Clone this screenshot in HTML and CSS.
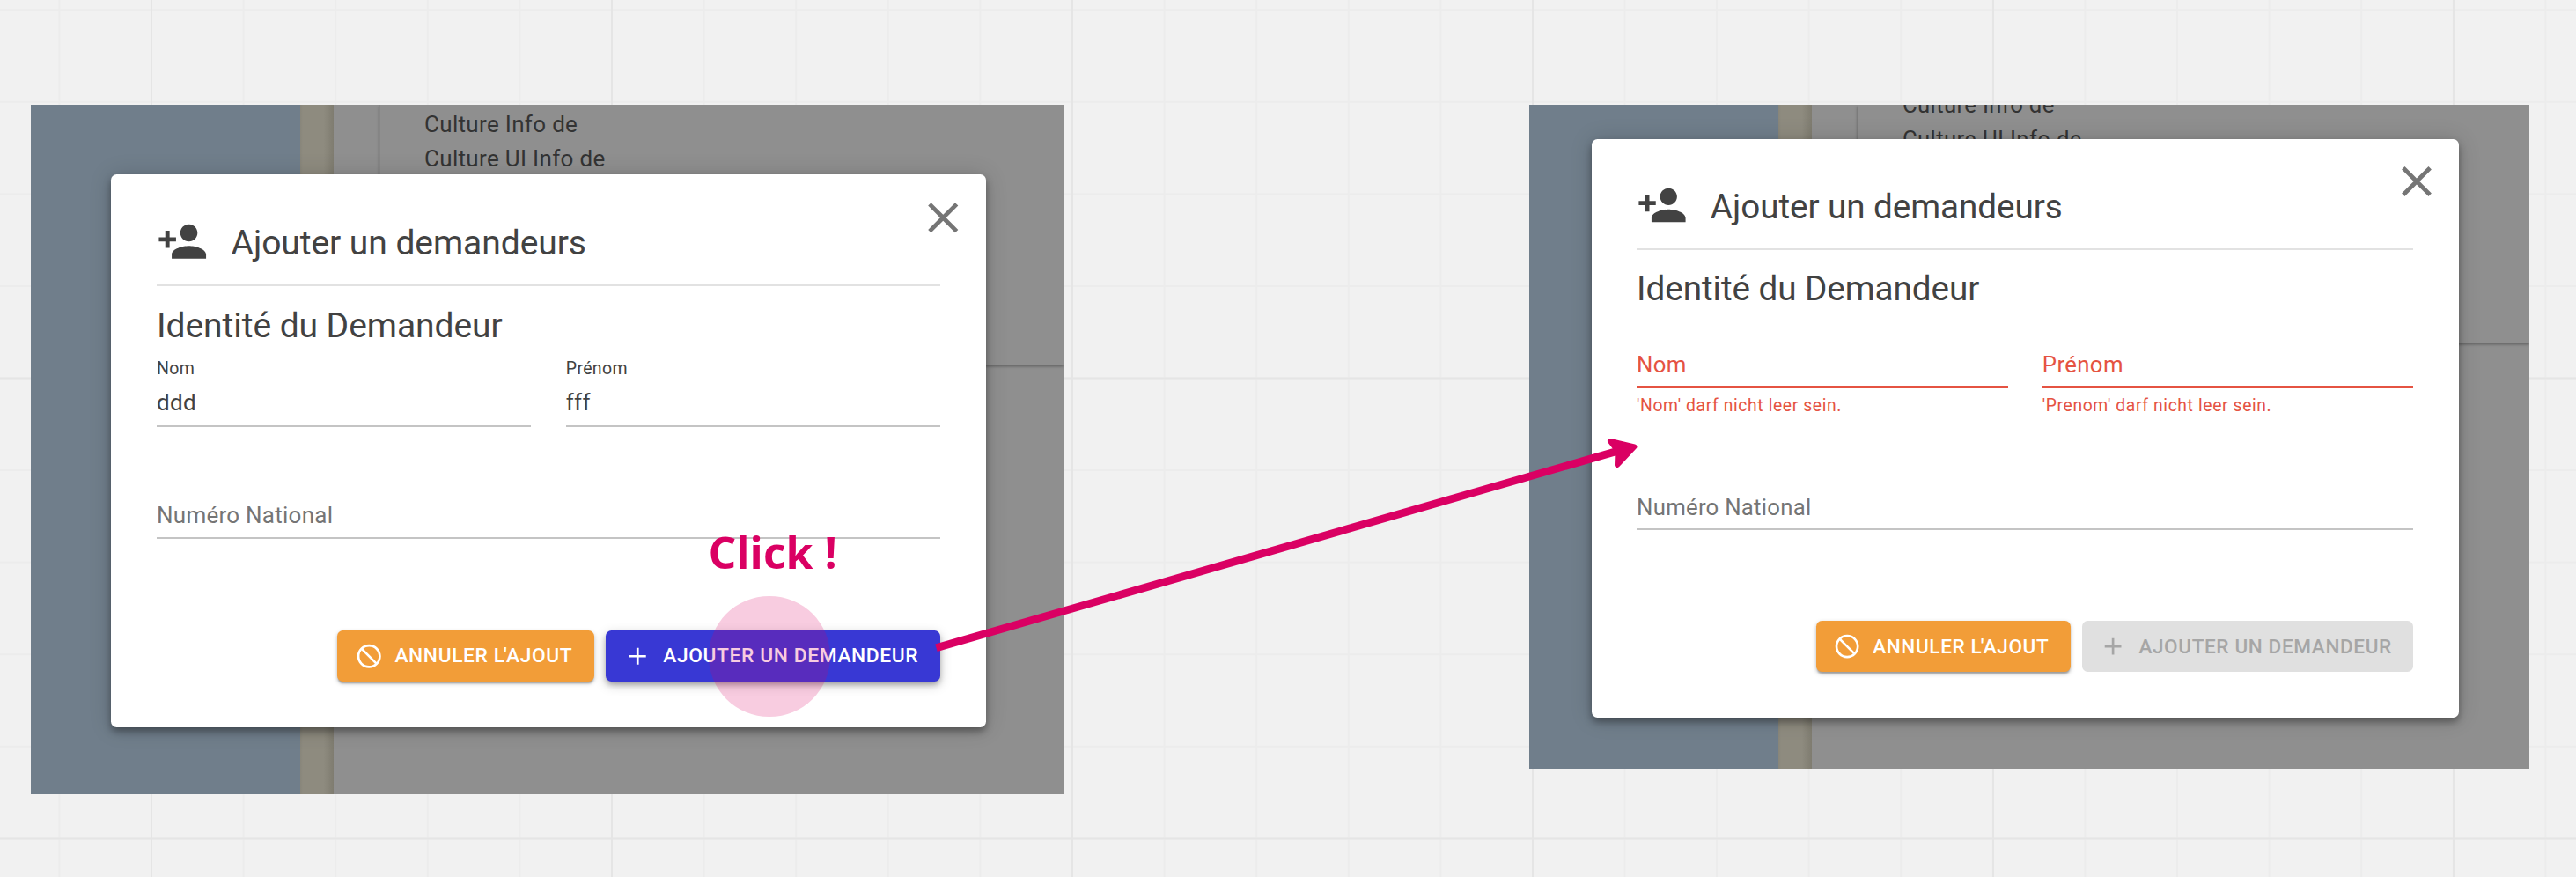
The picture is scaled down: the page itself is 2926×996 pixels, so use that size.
FILE: index.html
```html
<!DOCTYPE html>
<html lang="fr">
<head>
<meta charset="utf-8">
<title>Ajouter un demandeur</title>
<link rel="stylesheet" href="styles.css">
</head>
<body>
<main class="board">
  <section class="frame frame-filled">
    <div class="page">
      <div class="page-nav"></div>
      <div class="page-rail"></div>
      <div class="page-body">
        <div class="page-card">
          <p>Culture Info de</p>
          <p>Culture UI Info de</p>
        </div>
      </div>
    </div>
    <div class="dialog">
      <svg class="close" viewBox="0 0 24 24"><path d="M19 6.41 17.59 5 12 10.59 6.41 5 5 6.41 10.59 12 5 17.59 6.41 19 12 13.41 17.59 19 19 17.59 13.41 12z"/></svg>
      <header class="dialog-head">
        <svg class="head-icon" viewBox="0 0 24 24"><path d="M15 12c2.21 0 4-1.79 4-4s-1.79-4-4-4-4 1.790-4 4 1.790 4 4 4zm-9-2V7H4v3H1v2h3v3h2v-3h3v-2H6zm9 4c-2.670 0-8 1.340-8 4v2h16v-2c0-2.660-5.330-4-8-4z"/></svg>
        <h1>Ajouter un demandeurs</h1>
      </header>
      <h2>Identité du Demandeur</h2>
      <div class="row">
        <div class="field"><div class="control"><label>Nom</label><div class="value">ddd</div></div></div>
        <div class="field"><div class="control"><label>Prénom</label><div class="value">fff</div></div></div>
      </div>
      <div class="single">Numéro National</div>
      <footer class="actions">
        <button class="btn cancel"><svg viewBox="0 0 24 24"><path d="M12 2C6.480 2 2 6.480 2 12s4.480 10 10 10 10-4.480 10-10S17.520 2 12 2zM4 12c0-4.420 3.580-8 8-8 1.850 0 3.550.63 4.900 1.690L5.690 16.900C4.630 15.550 4 13.850 4 12zm8 8c-1.850 0-3.550-.63-4.900-1.690L18.310 7.100C19.370 8.450 20 10.150 20 12c0 4.420-3.580 8-8 8z"/></svg><span>ANNULER <span class="kern">L'</span>AJOUT</span></button>
        <button class="btn submit"><svg viewBox="0 0 24 24"><path d="M19 13h-6v6h-2v-6H5v-2h6V5h2v6h6z"/></svg><span>AJOUTER UN DEMANDEUR</span></button>
      </footer>
    </div>
  </section>

  <section class="frame frame-errors">
    <div class="page">
      <div class="page-nav"></div>
      <div class="page-rail"></div>
      <div class="page-body">
        <div class="page-card">
          <p>Culture Info de</p>
          <p>Culture UI Info de</p>
        </div>
      </div>
    </div>
    <div class="dialog">
      <svg class="close" viewBox="0 0 24 24"><path d="M19 6.41 17.59 5 12 10.59 6.41 5 5 6.41 10.59 12 5 17.59 6.41 19 12 13.41 17.59 19 19 17.59 13.41 12z"/></svg>
      <header class="dialog-head">
        <svg class="head-icon" viewBox="0 0 24 24"><path d="M15 12c2.21 0 4-1.79 4-4s-1.79-4-4-4-4 1.790-4 4 1.790 4 4 4zm-9-2V7H4v3H1v2h3v3h2v-3h3v-2H6zm9 4c-2.670 0-8 1.340-8 4v2h16v-2c0-2.660-5.330-4-8-4z"/></svg>
        <h1>Ajouter un demandeurs</h1>
      </header>
      <h2>Identité du Demandeur</h2>
      <div class="row">
        <div class="field invalid"><div class="control">Nom</div><p class="help">'Nom' darf nicht leer sein.</p></div>
        <div class="field invalid"><div class="control">Prénom</div><p class="help">'Prenom' darf nicht leer sein.</p></div>
      </div>
      <div class="single">Numéro National</div>
      <footer class="actions">
        <button class="btn cancel"><svg viewBox="0 0 24 24"><path d="M12 2C6.480 2 2 6.480 2 12s4.480 10 10 10 10-4.480 10-10S17.520 2 12 2zM4 12c0-4.420 3.580-8 8-8 1.850 0 3.550.63 4.900 1.690L5.690 16.900C4.630 15.550 4 13.850 4 12zm8 8c-1.850 0-3.550-.63-4.900-1.690L18.310 7.100C19.370 8.450 20 10.150 20 12c0 4.420-3.580 8-8 8z"/></svg><span>ANNULER <span class="kern">L'</span>AJOUT</span></button>
        <button class="btn submit" disabled><svg viewBox="0 0 24 24"><path d="M19 13h-6v6h-2v-6H5v-2h6V5h2v6h6z"/></svg><span>AJOUTER UN DEMANDEUR</span></button>
      </footer>
    </div>
  </section>

  <div class="tap"></div>
  <div class="note">Click !</div>
  <svg class="arrow" viewBox="0 0 2926 996"><path class="shaft" d="M1063.500 735.700 1838 512"/><path class="tip" d="M1829 501 1856.500 507.300 1837 528 1837.500 512z"/></svg>
</main>
</body>
</html>
```
FILE: styles.css
```css
* { box-sizing: border-box; margin: 0; padding: 0; }

body { font-family: Roboto, "Noto Sans", sans-serif; }

.board {
  position: relative;
  width: 2926px;
  height: 996px;
  overflow: hidden;
  background-color: #f1f1f1;
  background-image:
    linear-gradient(90deg, #e5e5e5 2px, transparent 2px),
    linear-gradient(#e5e5e5 2px, transparent 2px),
    linear-gradient(90deg, #ececec 2px, transparent 2px),
    linear-gradient(#ececec 2px, transparent 2px);
  background-size: 523px 100%, 100% 523px, 104.6px 100%, 100% 104.6px;
  background-position: 171px 0, 0 428.500px, 171px 0, 0 428.500px;
}

/* One design pixel is --u device pixels. */
.frame { position: absolute; top: 119px; overflow: hidden; }
.frame-filled { --u: 1.625px; left: 35px; width: 1173px; height: 783px; }
.frame-errors { --u: 1.611px; left: 1737px; width: 1136px; height: 754px; }

.page { display: flex; height: 100%; background: #8f8f8f; }
.page-nav { width: 306px; background: #707e8b; }
.page-rail { width: 38px; background: linear-gradient(90deg, #87857a, #8e8b7f 3px, #8e8b7f 70%, #7f7c70); }
.page-body { flex: 1; padding-left: 52px; }
.page-card {
  height: 295px;
  padding: 3px 0 0 50px;
  border-left: 1px solid #868686;
  background: #8f8f8f;
  box-shadow: 0 2px 3px #5c5c5c;
  color: #333;
  font-size: calc(16 * var(--u));
  line-height: calc(24 * var(--u));
  letter-spacing: .32px;
}
.frame-errors .page-nav { width: 283px; }
.frame-errors .page-card { display: flow-root; height: 270px; padding-top: 0; }
.frame-errors .page-card p:first-child { margin-top: -19px; }

.dialog {
  position: absolute;
  top: 79px;
  left: 91px;
  width: 994px;
  height: 628px;
  padding: 0 calc(32 * var(--u));
  border-radius: calc(4 * var(--u));
  background: #fff;
  color: #424242;
  box-shadow: 0 5px 8px rgba(0, 0, 0, .35), 0 1px 26px rgba(0, 0, 0, .16);
}
.frame-errors .dialog { top: 38.500px; left: 70.500px; width: 985.500px; height: 657.300px; }

.close {
  position: absolute;
  top: calc(12.300 * var(--u));
  right: calc(11.900 * var(--u));
  width: calc(36 * var(--u));
  height: calc(36 * var(--u));
  fill: #757575;
}

.dialog-head {
  display: flex;
  height: calc(78.300 * var(--u));
  padding-top: calc(29 * var(--u));
  border-bottom: 2px solid #e2e2e2;
}
.head-icon { width: calc(36 * var(--u)); height: calc(36 * var(--u)); fill: #424242; }
h1, h2 { font-weight: 400; font-size: calc(24 * var(--u)); letter-spacing: -.06px; }
h1 { margin: calc(1.100 * var(--u)) 0 0 calc(16 * var(--u)); line-height: calc(36 * var(--u)); }
h2 { margin-top: calc(11.500 * var(--u)); line-height: calc(32 * var(--u)); }

.row { display: grid; grid-template-columns: 1fr 1fr; gap: calc(24.300 * var(--u)); height: calc(104.400 * var(--u)); }
.control { height: calc(54.700 * var(--u)); padding-top: calc(6.200 * var(--u)); border-bottom: 2px solid #c4c4c4; letter-spacing: .35px; }
label { display: block; font-size: calc(12 * var(--u)); line-height: calc(16 * var(--u)); }
.value { margin-top: calc(3.900 * var(--u)); font-size: calc(16 * var(--u)); line-height: calc(24 * var(--u)); }

.frame-errors .row { height: calc(126 * var(--u)); }
.invalid { color: #e55342; }
.invalid .control {
  height: calc(54.200 * var(--u));
  padding-top: calc(25.800 * var(--u));
  border-bottom: 3px solid #e55342;
  font-size: calc(16 * var(--u));
  line-height: calc(24 * var(--u));
}
.help { margin-top: calc(4.200 * var(--u)); font-size: calc(12 * var(--u)); line-height: calc(16 * var(--u)); letter-spacing: calc(.38 * var(--u)); }

.single {
  height: calc(28.300 * var(--u));
  border-bottom: 2px solid #c4c4c4;
  color: #757575;
  font-size: calc(16 * var(--u));
  line-height: calc(24 * var(--u));
  letter-spacing: .25px;
}

.actions { display: flex; justify-content: flex-end; gap: calc(8 * var(--u)); margin-top: calc(64 * var(--u)); }
.btn {
  display: flex;
  align-items: center;
  gap: calc(8 * var(--u));
  width: calc(179.600 * var(--u));
  height: calc(36 * var(--u));
  padding-left: calc(12 * var(--u));
  border: 0;
  border-radius: calc(4 * var(--u));
  color: #fff;
  font: 500 calc(14 * var(--u)) Roboto, sans-serif;
  letter-spacing: .62px;
  white-space: nowrap;
}
.btn svg { width: calc(20 * var(--u)); height: calc(20 * var(--u)); fill: currentColor; }
.cancel svg { transform: scaleX(-1); }
.kern { letter-spacing: -.9px; }
.cancel { background: #f29d38; box-shadow: 0 3px 2px -1px rgba(0, 0, 0, .25), 0 2px 5px rgba(0, 0, 0, .25); }
.submit { width: calc(233.700 * var(--u)); background: #3838d4; box-shadow: 0 4px 6px -1px rgba(0, 0, 0, .3), 0 4px 14px rgba(0, 0, 0, .2); }
.submit:disabled { background: #e0e0e0; color: #a6a6a6; box-shadow: none; }

.tap { position: absolute; left: 805px; top: 676.500px; width: 137.500px; height: 137.500px; border-radius: 50%; background: rgba(218, 0, 99, .2); }
.note { position: absolute; left: 804.500px; top: 592px; color: #da0063; font: 700 50px/70px "Open Sans", sans-serif; white-space: nowrap; }
.arrow { position: absolute; inset: 0; width: 2926px; height: 996px; }
.shaft { fill: none; stroke: #da0063; stroke-width: 8.800; }
.tip { fill: #da0063; stroke: #da0063; stroke-width: 6; stroke-linejoin: round; }
```
